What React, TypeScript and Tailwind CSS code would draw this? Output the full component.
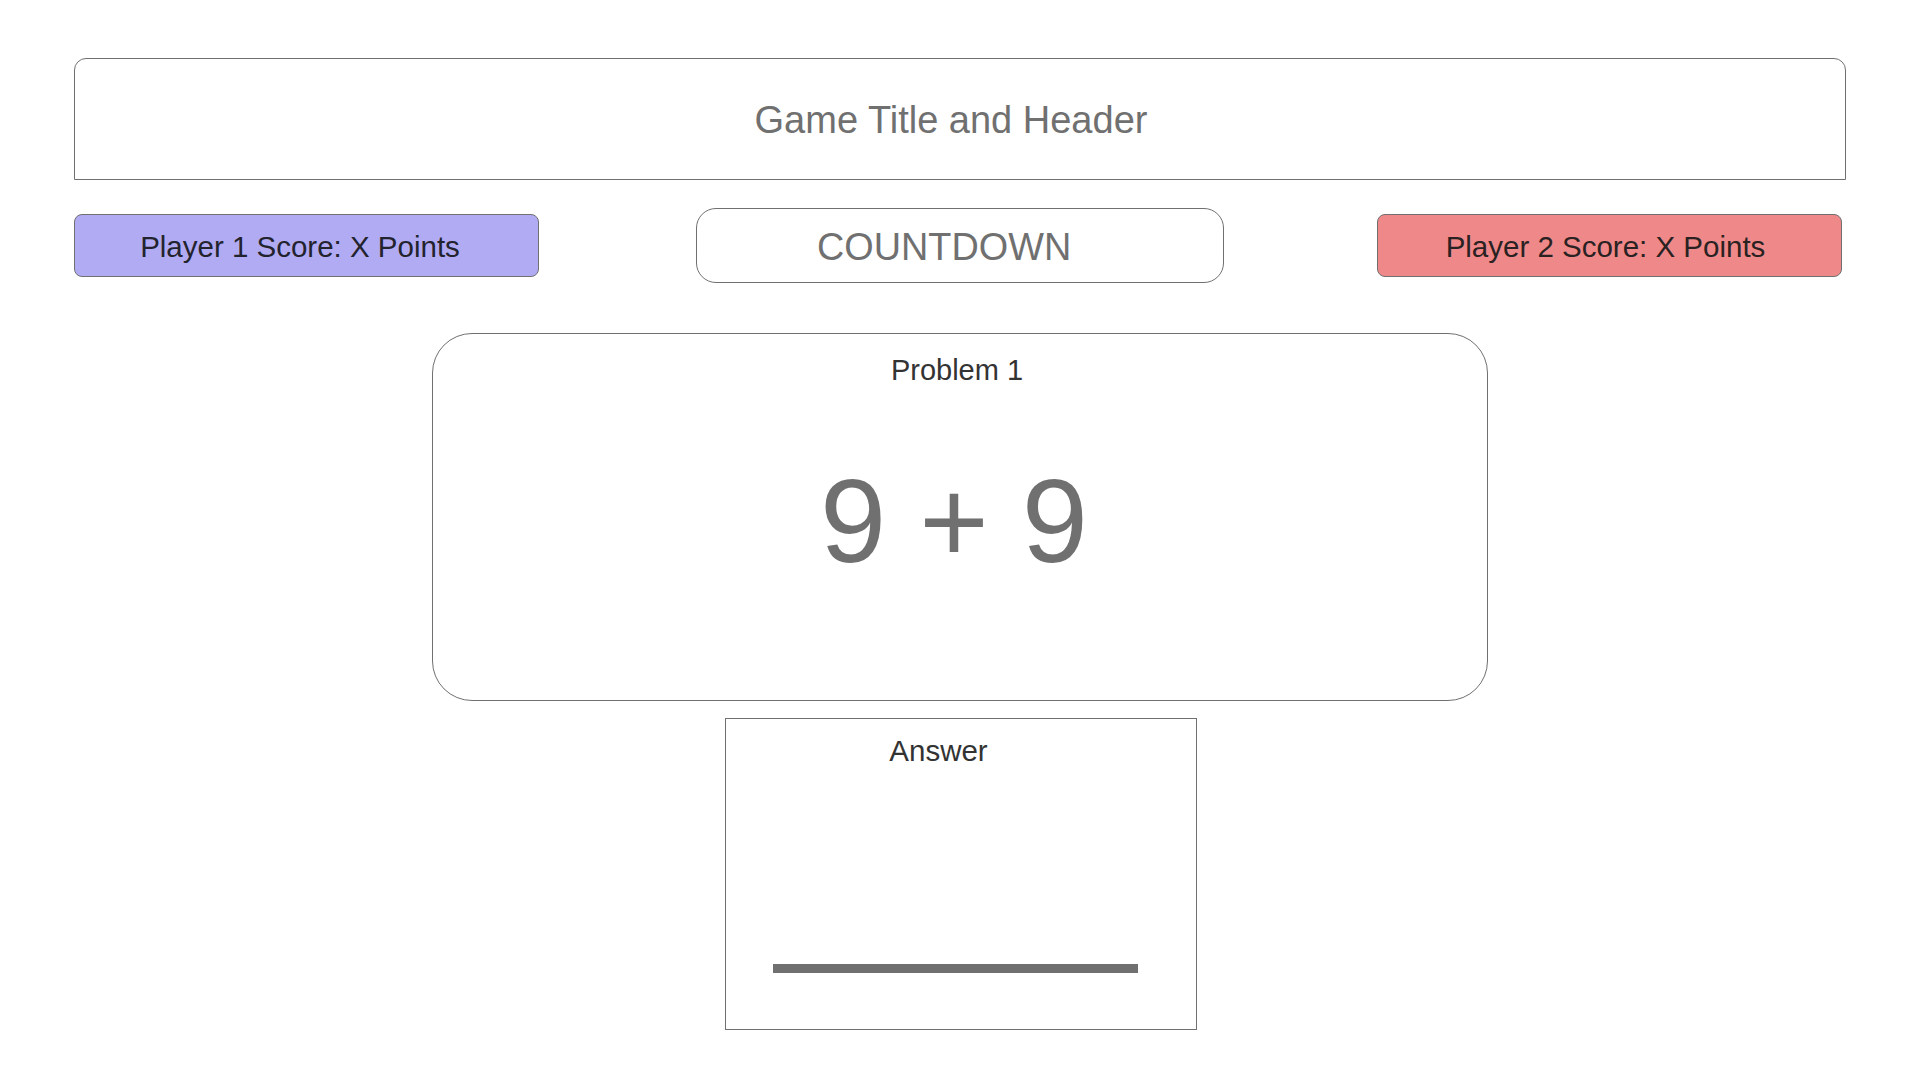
export default function App() {
  return (
    <div className="min-h-screen bg-white px-[74px] pt-[58px] font-['Liberation_Sans',Arial,sans-serif]">
      <header className="flex h-[122px] items-center justify-center rounded-t-[12px] border border-[#707070] pt-[2px] pr-[18px]">
        <h1 className="text-[38px] leading-none text-[#707070]">Game Title and Header</h1>
      </header>

      <div className="mt-[28px] flex h-[75px] items-center">
        <div className="flex h-[63px] w-[465px] shrink-0 items-center justify-center rounded-[8px] border border-[#707070] bg-[#b1abf4] pt-[2px] pr-[13px]">
          <span className="text-[29.5px] leading-none text-[#23232e]">Player 1 Score: X Points</span>
        </div>
        <div className="ml-[157px] flex h-[75px] w-[528px] shrink-0 items-center justify-center rounded-[20px] border border-[#707070] pt-[2px] pr-[31px]">
          <span className="inline-block scale-x-[0.97] text-[39px] leading-none text-[#707070]">COUNTDOWN</span>
        </div>
        <div className="ml-[153px] flex h-[63px] w-[465px] shrink-0 items-center justify-center rounded-[8px] border border-[#707070] bg-[#ef8989] pt-[2px] pr-[8px]">
          <span className="text-[29.5px] leading-none text-[#2a2222]">Player 2 Score: X Points</span>
        </div>
      </div>

      <section className="ml-[358px] mt-[50px] flex h-[368px] w-[1056px] flex-col items-center rounded-[40px] border border-[#707070] pt-[22px]">
        <p className="pr-[6px] text-[29px] leading-none text-[#333333]">Problem 1</p>
        <p className="mt-[76px] pr-[12px] text-[119px] leading-none text-[#707070]">9 + 9</p>
      </section>

      <section className="ml-[651px] mt-[17px] flex h-[312px] w-[472px] flex-col border border-[#707070] pt-[17px]">
        <div className="flex justify-center pr-[45px]">
          <span className="text-[29.5px] leading-none text-[#333333]">Answer</span>
        </div>
        <div className="ml-[47px] mt-[198px] h-[9px] w-[365px] bg-[#707070]" />
      </section>
    </div>
  );
}
